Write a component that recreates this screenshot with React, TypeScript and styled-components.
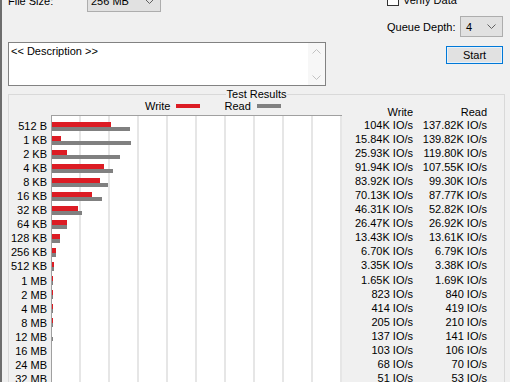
import styled, { createGlobalStyle } from 'styled-components';

const GlobalStyle = createGlobalStyle`
  html, body {
    margin: 0;
    padding: 0;
    background: #f0f0f0;
    overflow: hidden;
  }
  body {
    font-family: "Liberation Sans", Arial, sans-serif;
    font-size: 11px;
    color: #000;
  }
`;

const ROW_H = 14.06;
const SCALE_MAX = 512000;
const CHART_W = 290;

type Result = { size: string; write: string; read: string };

const results: Result[] = [
  { size: '512 B', write: '104K', read: '137.82K' },
  { size: '1 KB', write: '15.84K', read: '139.82K' },
  { size: '2 KB', write: '25.93K', read: '119.80K' },
  { size: '4 KB', write: '91.94K', read: '107.55K' },
  { size: '8 KB', write: '83.92K', read: '99.30K' },
  { size: '16 KB', write: '70.13K', read: '87.77K' },
  { size: '32 KB', write: '46.31K', read: '52.82K' },
  { size: '64 KB', write: '26.47K', read: '26.92K' },
  { size: '128 KB', write: '13.43K', read: '13.61K' },
  { size: '256 KB', write: '6.70K', read: '6.79K' },
  { size: '512 KB', write: '3.35K', read: '3.38K' },
  { size: '1 MB', write: '1.65K', read: '1.69K' },
  { size: '2 MB', write: '823', read: '840' },
  { size: '4 MB', write: '414', read: '419' },
  { size: '8 MB', write: '205', read: '210' },
  { size: '12 MB', write: '137', read: '141' },
  { size: '16 MB', write: '103', read: '106' },
  { size: '24 MB', write: '68', read: '70' },
  { size: '32 MB', write: '51', read: '53' },
  { size: '48 MB', write: '34', read: '35' },
  { size: '64 MB', write: '25', read: '26' },
];

const toIops = (v: string) =>
  v.endsWith('K') ? parseFloat(v) * 1000 : parseFloat(v);

const barWidth = (v: string) => (toIops(v) / SCALE_MAX) * CHART_W;

const Window = styled.div`
  width: 510px;
  height: 382px;
  overflow: hidden;
  box-sizing: border-box;
  border-left: 2px solid #6d6d6d;
  padding: 0 5px 0 6px;
`;

const Top = styled.div`
  display: flex;
  justify-content: space-between;
  margin-top: -10px;
`;

const LeftCol = styled.div`
  width: 318px;
  display: flex;
  flex-direction: column;
`;

const RightCol = styled.div`
  width: 118px;
  display: flex;
  flex-direction: column;
`;

const FieldRow = styled.div<{ $h: number; $mt?: number }>`
  display: flex;
  align-items: center;
  height: ${(p) => p.$h}px;
  margin-top: ${(p) => p.$mt ?? 0}px;
`;

const FieldLabel = styled.span<{ $w?: number }>`
  width: ${(p) => (p.$w ? `${p.$w}px` : 'auto')};
  white-space: nowrap;
`;

const Select = styled.div<{ $w: number; $pl: number }>`
  box-sizing: border-box;
  width: ${(p) => p.$w}px;
  height: 100%;
  margin-left: auto;
  margin-right: ${(p) => (p.$pl === 5 ? 2 : 0)}px;
  display: flex;
  align-items: center;
  justify-content: space-between;
  padding: 0 6px 0 ${(p) => p.$pl}px;
  background: #e1e1e1;
  border: 1px solid #adadad;
`;

const Checkbox = styled.span`
  box-sizing: border-box;
  width: 12px;
  height: 12px;
  border: 1px solid #333;
  background: #fff;
  margin-right: 4px;
`;

const StartButton = styled.button`
  box-sizing: border-box;
  align-self: flex-end;
  width: 57px;
  height: 18px;
  margin: 9px 2px 0 0;
  padding: 0;
  font: inherit;
  color: #000;
  background: #e1e1e1;
  border: 1px solid #0078d7;
  box-shadow: inset 0 0 0 1px #e5f1fb;
`;

const Description = styled.div`
  box-sizing: border-box;
  height: 44px;
  margin-top: 30px;
  display: flex;
  background: #fff;
  border: 1px solid #828282;
`;

const DescText = styled.div`
  flex: 1;
  padding: 2px 0 0 2px;
  line-height: 13px;
`;

const ScrollBar = styled.div`
  width: 17px;
  background: #f7f7f7;
  display: flex;
  flex-direction: column;
  justify-content: space-between;
  align-items: center;
  padding: 6px 0 5px;
`;

const Group = styled.fieldset`
  margin: 2px 0 0 0;
  padding: 0;
  min-width: 0;
  height: 400px;
  border: 1px solid #d9d9d9;
`;

const GroupTitle = styled.legend`
  margin: 0 auto;
  padding: 0 1px;
  line-height: 13px;
`;

const Results = styled.div`
  display: flex;
`;

const SizeCol = styled.div`
  width: 42px;
  box-sizing: border-box;
  padding: 18px 4px 0 0;
  text-align: right;
`;

const Cell = styled.div`
  height: ${ROW_H}px;
  line-height: ${ROW_H}px;
  white-space: nowrap;
`;

const ChartCol = styled.div`
  width: 291px;
`;

const Legend = styled.div`
  height: 10px;
  display: flex;
  align-items: center;
  padding-left: 94px;
`;

const Swatch = styled.span<{ $color: string }>`
  width: 24px;
  height: 4px;
  margin: 0 24px 0 6px;
  background: ${(p) => p.$color};
`;

const Chart = styled.div`
  margin-top: 4px;
  height: 300px;
  padding-top: 3px;
  background-color: #fff;
  background-image: repeating-linear-gradient(
    to right,
    transparent 0,
    transparent 27px,
    #e6e6e6 27px,
    #e6e6e6 29px
  );
  border-left: 1px solid #a0a0a0;
  border-top: 1px solid #a0a0a0;
`;

const BarRow = styled.div`
  height: ${ROW_H}px;
  display: flex;
  flex-direction: column;
  justify-content: center;
`;

const Bar = styled.div<{ $color: string; $h: number }>`
  height: ${(p) => p.$h}px;
  background: ${(p) => p.$color};
`;

const ValuesCol = styled.div`
  flex: 1;
  display: grid;
  grid-template-columns: 71px 74px;
  align-content: start;
  padding-top: 5px;
  text-align: right;
`;

const ValueHead = styled.div`
  line-height: 12px;
`;

const Chevron = ({ color, up }: { color: string; up?: boolean }) => (
  <svg width="9" height="5" viewBox="0 0 9 5">
    <polyline
      points={up ? '0.5,4.5 4.5,0.5 8.5,4.5' : '0.5,0.5 4.5,4.5 8.5,0.5'}
      fill="none"
      stroke={color}
      strokeWidth="1"
    />
  </svg>
);

export default function App() {
  return (
    <>
      <GlobalStyle />
      <Window>
        <Top>
          <LeftCol>
            <FieldRow $h={22}>
              <FieldLabel $w={79}>File Size:</FieldLabel>
              <Select $w={74} $pl={3} style={{ marginLeft: 0 }}>
                256 MB
                <Chevron color="#606060" />
              </Select>
            </FieldRow>
            <Description>
              <DescText>&lt;&lt; Description &gt;&gt;</DescText>
              <ScrollBar>
                <Chevron color="#c2c2c2" up />
                <Chevron color="#c2c2c2" />
              </ScrollBar>
            </Description>
          </LeftCol>
          <RightCol>
            <FieldRow $h={20}>
              <Checkbox />
              <FieldLabel>Verify Data</FieldLabel>
            </FieldRow>
            <FieldRow $h={21} $mt={6}>
              <FieldLabel>Queue Depth:</FieldLabel>
              <Select $w={43} $pl={5}>
                4
                <Chevron color="#606060" />
              </Select>
            </FieldRow>
            <StartButton>Start</StartButton>
          </RightCol>
        </Top>

        <Group>
          <GroupTitle>Test Results</GroupTitle>
          <Results>
            <SizeCol>
              {results.map((r) => (
                <Cell key={r.size}>{r.size}</Cell>
              ))}
            </SizeCol>

            <ChartCol>
              <Legend>
                Write
                <Swatch $color="#dc1c24" />
                Read
                <Swatch $color="#808080" />
              </Legend>
              <Chart>
                {results.map((r) => (
                  <BarRow key={r.size}>
                    <Bar $color="#dc1c24" $h={5} style={{ width: barWidth(r.write) }} />
                    <Bar $color="#808080" $h={4} style={{ width: barWidth(r.read) }} />
                  </BarRow>
                ))}
              </Chart>
            </ChartCol>

            <ValuesCol>
              <ValueHead>Write</ValueHead>
              <ValueHead>Read</ValueHead>
              {results.map((r) => [
                <Cell key={`${r.size}-w`}>{r.write} IO/s</Cell>,
                <Cell key={`${r.size}-r`}>{r.read} IO/s</Cell>,
              ])}
            </ValuesCol>
          </Results>
        </Group>
      </Window>
    </>
  );
}
